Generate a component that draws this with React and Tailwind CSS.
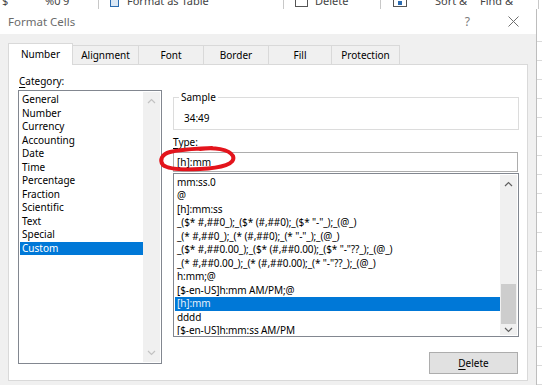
import React from 'react';

const categories = ['General', 'Number', 'Currency', 'Accounting', 'Date', 'Time', 'Percentage', 'Fraction', 'Scientific', 'Text', 'Special', 'Custom'];

const types = [
    'mm:ss.0',
    '@',
    '[h]:mm:ss',
    '_($* #,##0_);_($* (#,##0);_($* "-"_);_(@_)',
    '_(* #,##0_);_(* (#,##0);_(* "-"_);_(@_)',
    '_($* #,##0.00_);_($* (#,##0.00);_($* "-"??_);_(@_)',
    '_(* #,##0.00_);_(* (#,##0.00);_(* "-"??_);_(@_)',
    'h:mm;@',
    '[$-en-US]h:mm AM/PM;@',
    '[h]:mm',
    'dddd',
    '[$-en-US]h:mm:ss AM/PM',
];

const tabs = [
    { label: 'Number', w: 'w-[65px]' },
    { label: 'Alignment', w: 'w-[66px]' },
    { label: 'Font', w: 'w-[65px]' },
    { label: 'Border', w: 'w-[65px]' },
    { label: 'Fill', w: 'w-[63px]' },
    { label: 'Protection', w: 'w-[68px]' },
];

const Chevron = ({ up, color = '#606060' }) => (
    <svg width="9" height="6" viewBox="0 0 9 6">
        <polyline
            points={up ? '1,5 4.5,1.5 8,5' : '1,1 4.5,4.5 8,1'}
            fill="none"
            stroke={color}
            strokeWidth="1.2"
        />
    </svg>
);

const App = () => {
    return (
        <div className="relative w-[542px] h-[385px] overflow-hidden bg-white font-['Segoe_UI','Noto_Sans',sans-serif] text-[10px] text-black">
            {/* excel ribbon peeking above the dialog */}
            <div className="h-[9px] overflow-hidden bg-white text-[11px] leading-[16px] text-[#444] whitespace-nowrap">
                <div className="-mt-[7px] flex items-start h-[16px] w-[600px]">
                    <span className="shrink-0 ml-[2px] w-[10px]">$</span>
                    <span className="shrink-0 ml-[33px] w-[12px]">%0</span>
                    <span className="shrink-0 ml-[6px] w-[8px]">9</span>
                    <div className="shrink-0 ml-[27px] w-px h-[16px] bg-[#c8c8c8]" />
                    <div className="shrink-0 ml-[11px] mt-[4px] w-[9px] h-[10px] border border-[#2b6cb0] bg-[#dbe8f5]" />
                    <span className="shrink-0 ml-[8px] w-[78px]">Format as Table</span>
                    <div className="shrink-0 ml-[78px] w-px h-[16px] bg-[#c8c8c8]" />
                    <div className="shrink-0 ml-[11px] mt-[4px] w-[13px] h-[10px] border border-[#555]" />
                    <span className="shrink-0 ml-[7px] w-[40px]">Delete</span>
                    <div className="shrink-0 ml-[25px] w-px h-[16px] bg-[#c8c8c8]" />
                    <div className="shrink-0 ml-[12px] mt-[4px] w-[14px] h-[10px] border border-[#555] flex justify-center">
                        <div className="w-[4px] h-[4px] mt-[3px] bg-[#2b6cb0]" />
                    </div>
                    <span className="shrink-0 ml-[28px] w-[27px]">Sort &amp;</span>
                    <span className="shrink-0 ml-[18px] w-[25px]">Find &amp;</span>
                    <div className="shrink-0 ml-[33px] w-px h-[16px] bg-[#c8c8c8]" />
                </div>
            </div>

            <div className="flex h-[376px]">
                {/* dialog */}
                <div className="w-[536px] flex flex-col">
                    {/* title bar */}
                    <div className="h-[25px] bg-white flex items-center pl-[8px] text-[11.5px] text-[#6b6b6b]">
                        <span>Format Cells</span>
                        <span className="ml-auto mr-[38px] text-[12px] text-[#7a7a7a]">?</span>
                        <svg className="mr-[17px]" width="11" height="11" viewBox="0 0 11 11">
                            <path d="M0.5 0.5 L10.5 10.5 M10.5 0.5 L0.5 10.5" stroke="#6e6e6e" strokeWidth="1" />
                        </svg>
                    </div>

                    {/* body */}
                    <div className="flex-1 bg-[#f0f0f0] px-[8px] pt-[9px] flex flex-col">
                        {/* tabs */}
                        <div className="flex items-end h-[22px] relative z-10 -mb-px">
                            {tabs.map((t, i) =>
                                i === 0 ? (
                                    <div key={t.label} className={`${t.w} h-[22px] bg-white border border-b-0 border-[#d9d9d9] flex items-center justify-center`}>
                                        {t.label}
                                    </div>
                                ) : (
                                    <div key={t.label} className={`${t.w} h-[20px] bg-[#f0f0f0] border border-l-0 border-[#d9d9d9] flex items-center justify-center`}>
                                        {t.label}
                                    </div>
                                )
                            )}
                        </div>

                        {/* tab panel */}
                        <div className="h-[317px] bg-white border border-[#d9d9d9] flex pl-[9px] pr-[8px]">
                            {/* left: categories */}
                            <div className="w-[144px] pt-[9px] flex flex-col">
                                <div className="h-[14px] leading-[14px] pl-[1px]">
                                    <span className="underline underline-offset-2">C</span>ategory:
                                </div>
                                <div className="mt-[2px] h-[274px] border border-[#828790] flex p-px">
                                    <div className="flex-1 pt-[1px]">
                                        {categories.map((c) => (
                                            <div
                                                key={c}
                                                className={`h-[13.5px] leading-[13.5px] pl-[2px] ${c === 'Custom' ? 'bg-[#0078d7] text-white' : ''}`}
                                            >
                                                {c}
                                            </div>
                                        ))}
                                    </div>
                                    <div className="w-[17px] bg-[#f0f0f0] flex flex-col items-center justify-between py-[6px]">
                                        <Chevron up color="#c2c2c2" />
                                        <Chevron color="#c2c2c2" />
                                    </div>
                                </div>
                            </div>

                            {/* right: sample / type */}
                            <div className="ml-[11px] flex-1 flex flex-col pt-[25px]">
                                <fieldset className="h-[40px] border border-[#dcdcdc] px-0">
                                    <legend className="ml-[5px] px-[2px] leading-[14px]">Sample</legend>
                                    <div className="pl-[10px] mt-[7px] leading-[14px]">34:49</div>
                                </fieldset>

                                <div className="mt-[5px] h-[14px] leading-[14px]">
                                    <span className="underline underline-offset-2">T</span>ype:
                                </div>
                                <div className="mt-[3px] h-[20px] border border-[#adadad] flex items-center pl-[3px] mr-[1px]">
                                    [h]:mm
                                </div>
                                <div className="mt-[1px] h-[164px] border border-[#828790] flex p-px overflow-hidden">
                                    <div className="flex-1 pt-[0.5px] overflow-hidden tracking-[-0.1px]">
                                        {types.map((t) => (
                                            <div
                                                key={t}
                                                className={`h-[13.5px] leading-[13.5px] pl-[2px] whitespace-pre ${t === '[h]:mm' ? 'bg-[#0078d7] text-[#e6f0fa]' : ''}`}
                                            >
                                                {t}
                                            </div>
                                        ))}
                                    </div>
                                    <div className="w-[17px] bg-[#f0f0f0] flex flex-col items-center pt-[6px]">
                                        <Chevron up />
                                        <div className="mt-[97px] w-[15px] h-[40px] bg-[#cdcdcd]" />
                                        <div className="mt-[3px]">
                                            <Chevron />
                                        </div>
                                    </div>
                                </div>

                                <div className="mt-[15px] flex justify-end pr-[1px]">
                                    <div className="w-[89px] h-[22px] bg-[#e1e1e1] border border-[#adadad] flex items-center justify-center">
                                        <span>
                                            <span className="underline underline-offset-2">D</span>elete
                                        </span>
                                    </div>
                                </div>
                            </div>
                        </div>
                    </div>
                </div>

                {/* excel grid behind */}
                <div className="flex-1 bg-white border-l border-[#bdbdbd] flex flex-col pt-[14px]">
                    {Array.from({ length: 19 }).map((_, i) => (
                        <div key={i} className="h-[19.5px] border-b border-[#dadada]" />
                    ))}
                </div>
            </div>

            {/* red hand-drawn circle */}
            <svg className="absolute inset-0 pointer-events-none" width="542" height="385" viewBox="0 0 542 385">
                <path
                    d="M200 149 C214 147 229 149 233 156 C236 164 222 168 200 169 C182 170 168 169 163 165 C159 160 162 154 170 152 C182 149 196 149 212 148"
                    fill="none"
                    stroke="#e3141c"
                    strokeWidth="4"
                    strokeLinecap="round"
                    strokeLinejoin="round"
                />
            </svg>
        </div>
    );
};

export default App;
